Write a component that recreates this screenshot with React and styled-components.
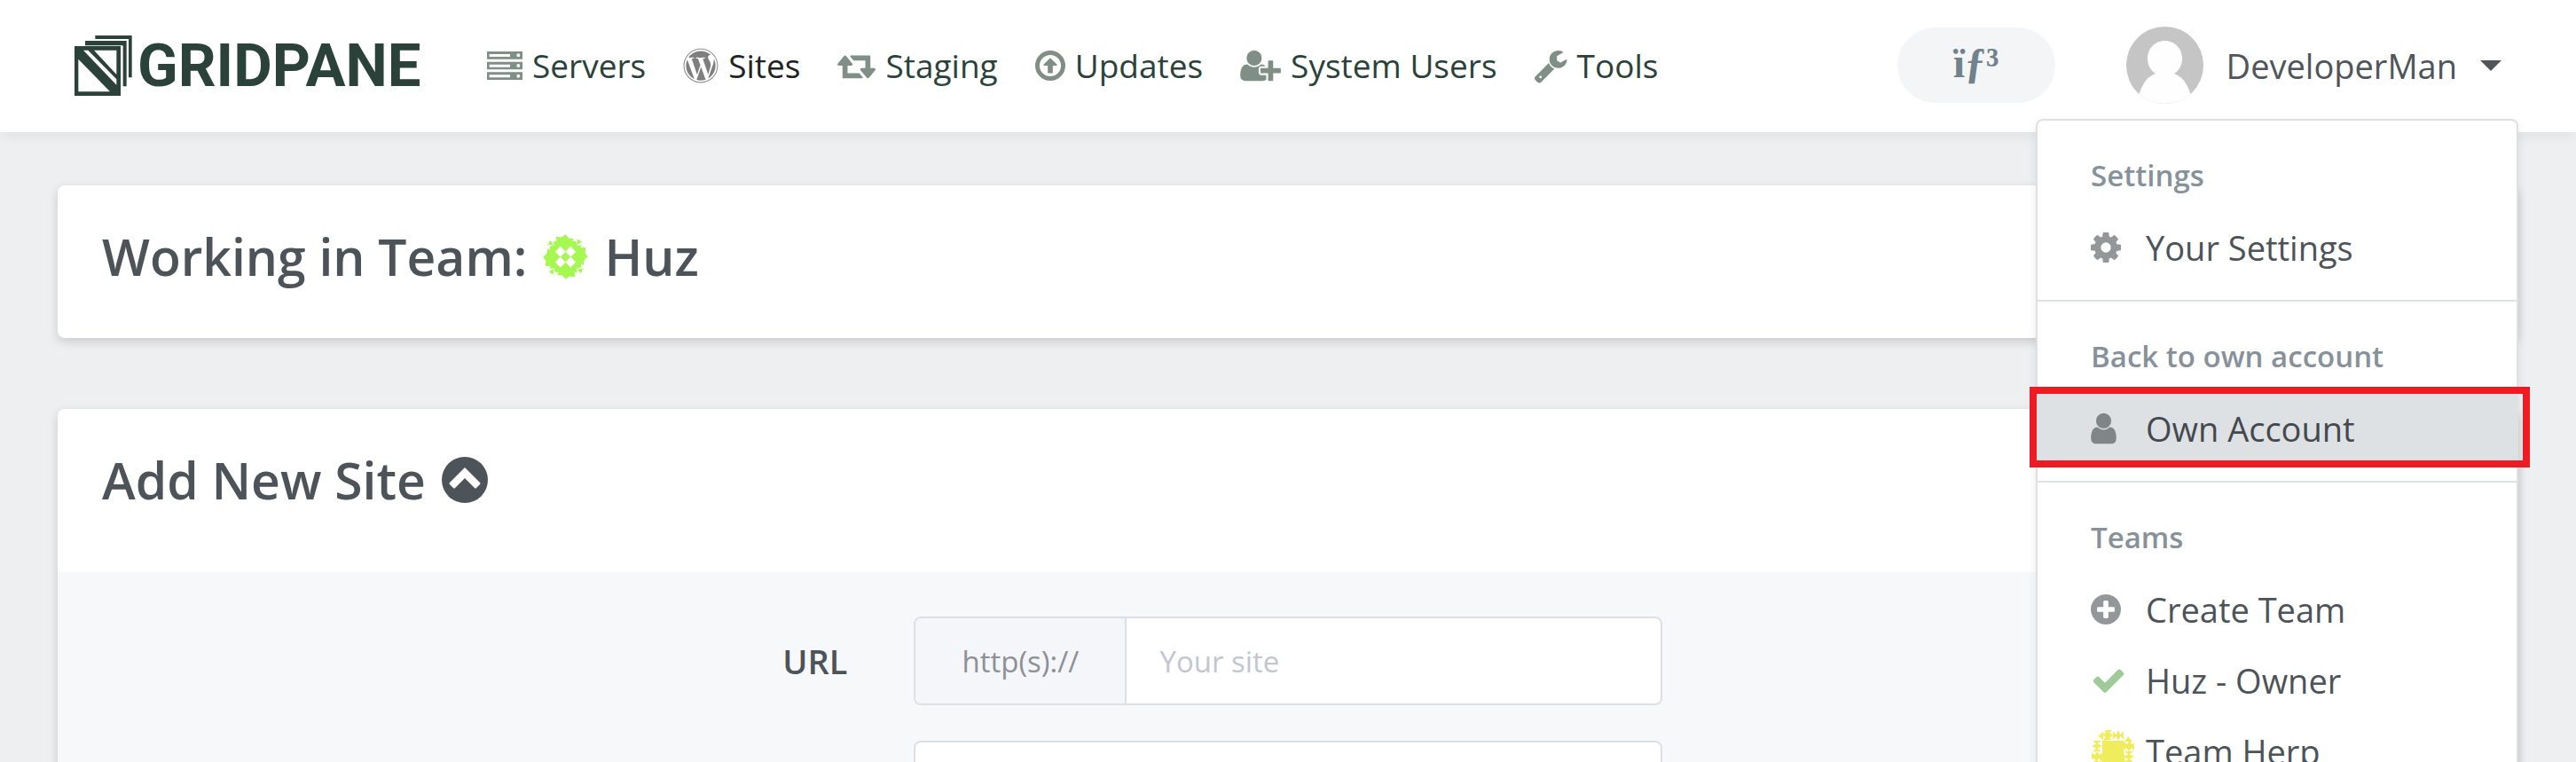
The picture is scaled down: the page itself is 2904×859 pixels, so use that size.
import { useState } from "react";
import { FaWordpress } from "react-icons/fa";
import styled, { createGlobalStyle } from "styled-components";

const GlobalStyle = createGlobalStyle`
    *, *::before, *::after {
        box-sizing: border-box;
    }
    body {
        margin: 0;
        background-color: #eeeff1;
        color: #4c5359;
        font-family: "Open Sans", "Noto Sans", sans-serif;
        font-size: 38px;
    }
`;

const Page = styled.div`
    height: 100vh;
    overflow: hidden;
`;
const Header = styled.header`
    position: relative;
    height: 149px;
    padding: 0 84px 2px;
    display: flex;
    align-items: center;
    background-color: #fff;
    box-shadow: 0 4px 16px rgba(0, 0, 0, 0.06);
`;
const Brand = styled.a`
    display: flex;
    align-items: center;
    gap: 6px;
    width: 465px;
    flex-shrink: 0;
    color: #2b423b;
    font-family: Roboto, sans-serif;
    font-size: 67px;
    line-height: 72px;
    font-weight: 700;
    text-decoration: none;
`;
const Nav = styled.nav`
    display: flex;
    align-items: center;
    gap: 42px;
    font-size: 37px;
`;
const NavLink = styled.a`
    display: flex;
    align-items: center;
    gap: 11px;
    line-height: 48px;
    white-space: nowrap;
    text-decoration: none;
    color: ${props => (props.$active ? "#212322" : "#2b423b")};

    svg {
        flex-shrink: 0;
        color: ${props => (props.$active ? "#7f7f7f" : "#7f8f88")};
    }
`;
const HeaderRight = styled.div`
    margin-left: auto;
    display: flex;
    align-items: center;
`;
const Notifications = styled.button`
    width: 178px;
    height: 85px;
    margin-right: 80px;
    padding: 0 0 6px;
    border: none;
    border-radius: 43px;
    background-color: #f3f5f7;
    color: #71828d;
    font-family: "Liberation Serif", serif;
    font-size: 48px;
    font-weight: 700;
    cursor: pointer;
`;
const UserToggle = styled.button`
    display: flex;
    align-items: center;
    padding: 0;
    border: none;
    background: none;
    color: #4f5559;
    font: inherit;
    cursor: pointer;
`;
const UserName = styled.span`
    margin: 0 26px 0 26px;
    line-height: 48px;
`;
const Caret = styled.span`
    border-left: 12px solid transparent;
    border-right: 12px solid transparent;
    border-top: 12px solid currentColor;
`;

const Menu = styled.div`
    position: absolute;
    top: 134px;
    right: 65px;
    z-index: 10;
    width: 544px;
    padding: 17px 0;
    border: 2px solid #dfe0e2;
    border-radius: 8px;
    background-color: #fff;
    box-shadow: 0 4px 12px rgba(0, 0, 0, 0.08);
`;
const MenuTitle = styled.h6`
    margin: 0;
    padding: 2px 60px 0;
    color: #87919a;
    font-size: 33px;
    font-weight: 600;
    line-height: 85px;
`;
const MenuItem = styled.a`
    display: flex;
    align-items: center;
    height: 80px;
    padding: 0 60px 2px;
    color: ${props => (props.$selected ? "#43494e" : "#4c5359")};
    background-color: ${props => (props.$selected ? "#dde1e4" : "transparent")};
    line-height: 48px;
    text-decoration: none;
`;
const MenuIcon = styled.span`
    display: flex;
    align-items: center;
    width: 62px;
    color: ${props => props.$color || "#939799"};
`;
const MenuDivider = styled.hr`
    height: 2px;
    margin: 18px 0 17px;
    border: none;
    background-color: #dde1e5;
`;
const Marked = styled.div`
    position: relative;

    &::after {
        content: "";
        position: absolute;
        top: -8px;
        right: -15px;
        bottom: -3px;
        left: -9px;
        border: 8px solid #ed1c24;
        pointer-events: none;
    }
`;

const Main = styled.main`
    display: flex;
    flex-direction: column;
    gap: 80px;
    padding: 60px 65px;
`;
const Card = styled.section`
    overflow: hidden;
    border-radius: 8px;
    background-color: #fff;
    box-shadow: 0 4px 12px rgba(0, 0, 0, 0.16);
`;
const CardTitle = styled.h2`
    display: flex;
    align-items: center;
    gap: 18px;
    margin: 0;
    padding: 47px 50px ${props => (props.$tall ? "71px" : "59px")};
    color: #4c5359;
    font-size: 57px;
    font-weight: 600;
    line-height: 66px;
`;
const CollapseButton = styled.button`
    display: flex;
    padding: 0;
    border: none;
    background: none;
    color: inherit;
    cursor: pointer;
`;
const CardBody = styled.form`
    display: flex;
    flex-direction: column;
    gap: 40px;
    padding: 50px 0;
    background-color: #f7f8fa;
`;
const FormRow = styled.div`
    display: grid;
    grid-template-columns: 32.1% 30.4%;
    column-gap: 75px;
    align-items: center;
`;
const Label = styled.label`
    text-align: right;
    font-weight: 600;
`;
const InputGroup = styled.div`
    grid-column: 2;
    display: flex;
    height: 100px;
    overflow: hidden;
    border: 2px solid #dddfe6;
    border-radius: 8px;
    background-color: #fff;
    font-size: 33px;
`;
const Prefix = styled.span`
    display: flex;
    align-items: center;
    justify-content: center;
    width: 238px;
    flex-shrink: 0;
    border-right: 2px solid #dddfe6;
    background-color: #f5f6fa;
    color: #8d9195;
`;
const Input = styled.input`
    flex: 1;
    min-width: 0;
    padding: 0 37px;
    border: none;
    outline: none;
    background: none;
    color: #4c5359;
    font: inherit;

    &::placeholder {
        color: #c3c6cf;
        opacity: 1;
    }
`;

const Glyph = ({ width = 1536, x = 0, size = 40, children }) => (
    <svg
        height={size}
        width={Math.round((width * size) / 1792)}
        viewBox={`${x} 0 ${width} 1792`}
        fill="currentColor"
        aria-hidden="true"
    >
        {children}
    </svg>
);

const LogoMark = () => (
    <svg width="65" height="68" viewBox="0 0 195 204" fill="#2b423b" aria-hidden="true">
        <path d="M70 0H194V142H183V12H70Z" />
        <path d="M36 18H176V172H164V34H36Z" />
        <path fillRule="evenodd" d="M0 36H156V204H0ZM13 80V190H120ZM30 50L142 167V148L46 50ZM66 50L142 132V50Z" />
    </svg>
);

const ServersIcon = () => (
    <svg width="40" height="32" viewBox="0 0 120 96" fill="currentColor" aria-hidden="true">
        {[0, 35, 70].map(y => (
            <path
                key={y}
                fillRule="evenodd"
                d={`M0 ${y}h120v26h-120zM8 ${y + 9}v9h70v-9zM100 ${y + 13}a6 6 0 1 0 12 0a6 6 0 1 0 -12 0z`}
            />
        ))}
    </svg>
);

const StagingIcon = () => (
    <Glyph width={1920}>
        <path d="M1280 1504q0 13-9.5 22.5t-22.5 9.5h-960q-8 0-13.5-2t-9-7-5.5-8-3-11.5-1-11.5v-600h-192q-26 0-45-19t-19-45q0-24 15-41l320-384q19-22 49-22t49 22l320 384q15 17 15 41 0 26-19 45t-45 19h-192v384h576q16 0 25 11l160 192q7 10 7 21zm640-416q0 24-15 41l-320 384q-20 23-49 23t-49-23l-320-384q-15-17-15-41 0-26 19-45t45-19h192v-384h-576q-16 0-25-12l-160-192q-7-9-7-20 0-13 9.5-22.5t22.5-9.5h960q8 0 13.5 2t9 7 5.5 8 3 11.5 1 11.5v600h192q26 0 45 19t19 45z" />
    </Glyph>
);

const UpdatesIcon = () => (
    <Glyph x={128}>
        <circle cx="896" cy="896" r="656" fill="none" stroke="currentColor" strokeWidth="224" />
        <path d="M896 512q14 0 24 11l318 319q14 17 6 36-8 18-28 18h-192v352q0 32-32 32h-192q-32 0-32-32v-352h-192q-22 0-30-20-7-19 7-35l320-319q9-10 23-10z" />
    </Glyph>
);

const UsersIcon = () => (
    <Glyph width={2048}>
        <path d="M704 896q-159 0-271.5-112.5t-112.5-271.5 112.5-271.5 271.5-112.5 271.5 112.5 112.5 271.5-112.5 271.5-271.5 112.5zm960 128h352q13 0 22.5 9.5t9.5 22.5v192q0 13-9.5 22.5t-22.5 9.5h-352v352q0 13-9.5 22.5t-22.5 9.5h-192q-13 0-22.5-9.5t-9.5-22.5v-352h-352q-13 0-22.5-9.5t-9.5-22.5v-192q0-13 9.5-22.5t22.5-9.5h352v-352q0-13 9.5-22.5t22.5-9.5h192q13 0 22.5 9.5t9.5 22.5v352zm-736 224q0 52 38 90t90 38h256v238q-68 50-171 50h-874q-121 0-194-69t-73-190q0-53 3.5-103.5t14-109 26.5-108.5 43-97.5 62-81 85.5-53.5 111.5-20q19 0 39 17 79 61 154.5 91.5t164.5 30.5 164.5-30.5 154.5-91.5q20-17 39-17 132 0 217 96h-223q-52 0-90 38t-38 90v192z" />
    </Glyph>
);

const WrenchIcon = () => (
    <Glyph width={1664} x={85}>
        <path d="M448 1472q0-26-19-45t-45-19-45 19-19 45 19 45 45 19 45-19 19-45zm644-420l-682 682q-37 37-90 37-52 0-91-37l-106-108q-38-36-38-90 0-53 38-91l681-681q39 98 114.5 173.5t173.5 114.5zm634-435q0 39-23 106-47 134-164.5 217.5t-258.5 83.5q-185 0-316.5-131.5t-131.5-316.5 131.5-316.5 316.5-131.5q58 0 121.5 16.5t107.5 46.5q16 11 16 28t-16 28l-293 169v224l193 107q5-3 79-48.5t135.5-81 70.5-35.5q15 0 23.5 10t8.5 25z" />
    </Glyph>
);

const CogIcon = () => (
    <Glyph x={128}>
        <path d="M1152 896q0-106-75-181t-181-75-181 75-75 181 75 181 181 75 181-75 75-181zm512-109v222q0 12-8 23t-20 13l-185 28q-19 54-39 91 35 50 107 138 10 12 10 25t-9 23q-27 37-99 108t-94 71q-12 0-26-9l-138-108q-44 23-91 38-16 136-29 186-7 28-36 28h-222q-14 0-24.5-8.5t-11.5-21.5l-28-184q-49-16-90-37l-141 107q-10 9-25 9-14 0-25-11-126-114-165-168-7-10-7-23 0-12 8-23 15-21 51-66.5t54-70.5q-27-50-41-99l-183-27q-13-2-21-12.5t-8-23.5v-222q0-12 8-23t19-13l186-28q14-46 39-92-40-57-107-138-10-12-10-24 0-10 9-23 26-36 98.5-107.5t94.5-71.5q13 0 26 10l138 107q44-23 91-38 16-136 29-186 7-28 36-28h222q14 0 24.5 8.5t11.5 21.5l28 184q49 16 90 37l142-107q9-9 24-9 13 0 25 10 129 119 165 170 7 8 7 22 0 12-8 23-15 21-51 66.5t-54 70.5q26 50 41 98l183 28q13 2 21 12.5t8 23.5z" />
    </Glyph>
);

const UserIcon = () => (
    <Glyph width={1280} x={256}>
        <path d="M1536 1399q0 109-62.5 187t-150.5 78h-854q-88 0-150.5-78t-62.5-187q0-85 8.5-160.5t31.5-152 58.5-131 94-89 134.5-34.5q131 128 313 128t313-128q76 0 134.5 34.5t94 89 58.5 131 31.5 152 8.5 160.5zm-256-887q0 159-112.5 271.5t-271.5 112.5-271.5-112.5-112.5-271.5 112.5-271.5 271.5-112.5 271.5 112.5 112.5 271.5z" />
    </Glyph>
);

const PlusCircleIcon = () => (
    <Glyph x={128}>
        <path d="M1344 960v-128q0-26-19-45t-45-19h-256v-256q0-26-19-45t-45-19h-128q-26 0-45 19t-19 45v256h-256q-26 0-45 19t-19 45v128q0 26 19 45t45 19h256v256q0 26 19 45t45 19h128q26 0 45-19t19-45v-256h256q26 0 45-19t19-45zm320-64q0 209-103 385.5t-279.5 279.5-385.5 103-385.5-103-279.5-279.5-103-385.5 103-385.5 279.5-279.5 385.5-103 385.5 103 279.5 279.5 103 385.5z" />
    </Glyph>
);

const CheckIcon = () => (
    <Glyph width={1792}>
        <path d="M1671 566q0 40-28 68l-724 724-136 136q-28 28-68 28t-68-28l-136-136-362-362q-28-28-28-68t28-68l136-136q28-28 68-28t68 28l294 295 656-657q28-28 68-28t68 28l136 136q28 28 28 68z" />
    </Glyph>
);

const ChevronCircleIcon = () => (
    <svg width="52" height="52" viewBox="0 0 52 52" aria-hidden="true">
        <circle cx="26" cy="26" r="26" fill="currentColor" />
        <path
            d="M26 12L43 29q1 1 0 2l-4 4q-1 1-2 0L26 24L15 35q-1 1-2 0l-4-4q-1-1 0-2Z"
            fill="#fff"
        />
    </svg>
);

const UserAvatar = () => (
    <svg width="87" height="87" viewBox="0 0 87 87" aria-hidden="true">
        <clipPath id="avatar">
            <circle cx="43.5" cy="43.5" r="43.5" />
        </clipPath>
        <g clipPath="url(#avatar)">
            <rect width="87" height="87" fill="#c5c5c5" />
            <path d="M43.500 16C55 16 63 25 63 36C63 43 60 49 54 53C66 57 72 70 75 87H12C15 70 21 57 33 53C27 49 24 43 24 36C24 25 32 16 43.500 16Z" fill="#fefefe" />
        </g>
    </svg>
);

const HuzAvatar = () => (
    <svg width="51" height="51" viewBox="18 22 150 150" aria-hidden="true">
        {[0, 90, 180, 270].map(angle => (
            <g key={angle} transform={`rotate(${angle} 93 97)`} fill="#a4f84f">
                <path d="M92 98V23L104 35L122 38L115 45L128 46L132 60L146 58L143 67L160 66L158 84L168 98Z" />
                <path d="M131 33L134 40L148 46L134 58Z" />
            </g>
        ))}
        {[[76, 80], [110, 80], [76, 115], [110, 115]].map(([x, y]) => (
            <path key={`${x}-${y}`} d={`M${x} ${y - 18}l17 18l-17 18l-17 -18z`} fill="#fff" />
        ))}
    </svg>
);

const HerpAvatar = () => (
    <svg width="50" height="50" viewBox="0 0 50 50" fill="#efed5c" aria-hidden="true">
        <clipPath id="herp">
            <circle cx="25" cy="25" r="25" />
        </clipPath>
        <g clipPath="url(#herp)">
            {[0, 90, 180, 270].map(angle => (
                <g key={angle} transform={`rotate(${angle} 25 25)`}>
                    <path d="M12 6L17 4L15 1H24L21 4L25 7L21 10L24 12H14L17 9Z" />
                    <path d="M25 2L29 7L25 12ZM31 1L34 7L31 13L28 7ZM37 2V12L33 7Z" />
                    <path d="M38 14L42 8L47 14Z" />
                </g>
            ))}
            <path d="M13 13L17 12L20 13H37L39 17L37 23L39 37L33 38L30 37H13L11 33L13 27Z" />
        </g>
    </svg>
);

const navItems = [
    { label: "Servers", icon: <ServersIcon /> },
    { label: "Sites", icon: <FaWordpress size={40} />, active: true },
    { label: "Staging", icon: <StagingIcon /> },
    { label: "Updates", icon: <UpdatesIcon /> },
    { label: "System Users", icon: <UsersIcon /> },
    { label: "Tools", icon: <WrenchIcon /> },
];

const UserMenu = () => (
    <Menu>
        <MenuTitle>Settings</MenuTitle>
        <MenuItem href="#settings">
            <MenuIcon><CogIcon /></MenuIcon>
            Your Settings
        </MenuItem>
        <MenuDivider />
        <MenuTitle>Back to own account</MenuTitle>
        <Marked>
            <MenuItem href="#account" $selected>
                <MenuIcon $color="#808588"><UserIcon /></MenuIcon>
                Own Account
            </MenuItem>
        </Marked>
        <MenuDivider />
        <MenuTitle>Teams</MenuTitle>
        <MenuItem href="#create-team">
            <MenuIcon><PlusCircleIcon /></MenuIcon>
            Create Team
        </MenuItem>
        <MenuItem href="#huz">
            <MenuIcon $color="#9fcb9b"><CheckIcon /></MenuIcon>
            Huz - Owner
        </MenuItem>
        <MenuItem href="#herp">
            <MenuIcon><HerpAvatar /></MenuIcon>
            Team Herp
        </MenuItem>
    </Menu>
);

const App = () => {
    const [menuOpen, setMenuOpen] = useState(true);
    const [formOpen, setFormOpen] = useState(true);

    return (
        <Page>
            <GlobalStyle />
            <Header>
                <Brand href="#home">
                    <LogoMark />
                    GRIDPANE
                </Brand>
                <Nav>
                    {navItems.map(item => (
                        <NavLink key={item.label} href="#nav" $active={item.active}>
                            {item.icon}
                            {item.label}
                        </NavLink>
                    ))}
                </Nav>
                <HeaderRight>
                    <Notifications type="button">ïƒ³</Notifications>
                    <UserToggle type="button" aria-expanded={menuOpen} onClick={() => setMenuOpen(!menuOpen)}>
                        <UserAvatar />
                        <UserName>DeveloperMan</UserName>
                        <Caret />
                    </UserToggle>
                </HeaderRight>
                {menuOpen && <UserMenu />}
            </Header>
            <Main>
                <Card>
                    <CardTitle>
                        Working in Team:
                        <HuzAvatar />
                        Huz
                    </CardTitle>
                </Card>
                <Card>
                    <CardTitle $tall>
                        Add New Site
                        <CollapseButton type="button" aria-label="Toggle form" onClick={() => setFormOpen(!formOpen)}>
                            <ChevronCircleIcon />
                        </CollapseButton>
                    </CardTitle>
                    {formOpen && (
                        <CardBody>
                            <FormRow>
                                <Label htmlFor="url">URL</Label>
                                <InputGroup>
                                    <Prefix>http(s)://</Prefix>
                                    <Input id="url" type="text" placeholder="Your site" />
                                </InputGroup>
                            </FormRow>
                            <FormRow>
                                <InputGroup>
                                    <Input type="text" aria-label="Site options" />
                                </InputGroup>
                            </FormRow>
                        </CardBody>
                    )}
                </Card>
            </Main>
        </Page>
    );
};

export default App;
